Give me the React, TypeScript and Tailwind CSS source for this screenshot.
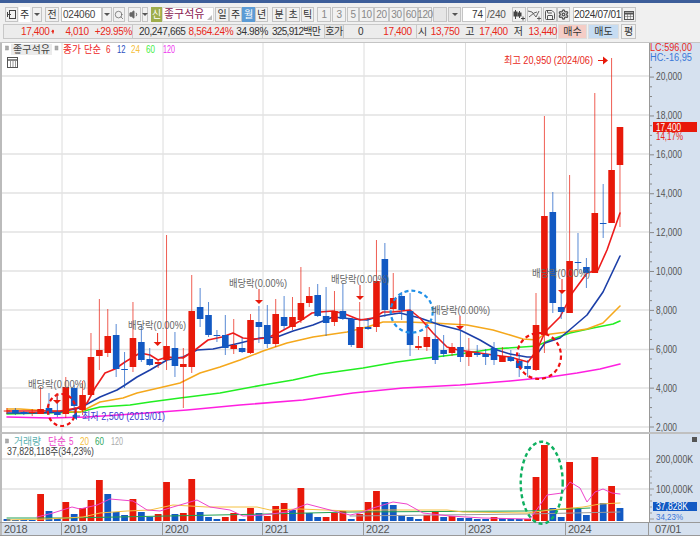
import { Save, Search, Settings, Volume1 } from "lucide-react";

type Candle = [number, number, number, number, number];

// wick top, wick bottom, body top, body bottom, 1 = red / 0 = blue (page pixel y)
const candles: Candle[] = [
  [408, 414, 410.5, 411.5, 1], [408, 415, 410, 413, 0], [411, 415, 412, 414, 0], [409, 416, 412, 413, 1],
  [387, 414, 409, 414, 1], [393, 415, 408, 412, 0], [396, 417, 412, 415, 0], [377, 418, 387, 414, 1],
  [385, 413, 388, 406, 0], [381, 415, 395, 410, 1], [333, 392, 357, 395, 1], [299, 370, 350, 356, 1],
  [309, 357, 336, 353, 1], [324, 377, 335, 369, 0], [352, 388, 369, 370, 0], [302, 372, 338, 367, 1],
  [325, 362, 342, 360, 0], [348, 366, 359, 365, 0], [360, 368, 362, 364, 1], [235, 370, 346, 360, 1],
  [332, 377, 348, 366, 0], [348, 408, 364, 367, 1], [275, 373, 311, 367, 1], [288, 327, 307, 319, 0],
  [302, 337, 315, 335, 0], [330, 342, 335, 336, 0], [315, 355, 335, 348, 0], [319, 354, 345, 349, 1],
  [338, 353, 348, 352, 0], [314, 354, 320, 353, 1], [306, 343, 322, 327, 0], [305, 348, 325, 344, 0],
  [299, 347, 314, 344, 1], [296, 330, 317, 326, 0], [297, 330, 317, 327, 1], [267, 323, 303, 320, 1],
  [287, 307, 296, 303, 1], [284, 317, 295, 316, 0], [287, 336, 316, 323, 0], [291, 326, 311, 322, 1],
  [283, 320, 311, 319, 0], [318, 347, 319, 345, 0], [302, 348, 327, 348, 1], [318, 330, 327, 329, 0],
  [240, 332, 281, 327, 1], [243, 317, 259, 310, 0], [273, 312, 298, 309, 1], [292, 320, 296, 310, 0],
  [293, 356, 311, 345, 0], [336, 350, 346, 348, 1], [323, 351, 337, 347, 1], [307, 364, 339, 360, 0],
  [335, 357, 350, 354, 0], [343, 356, 347, 353, 1], [330, 362, 347, 357, 0], [338, 366, 352, 357, 1],
  [345, 357, 353, 355, 0], [349, 365, 354, 357, 0], [342, 365, 348, 360, 0], [347, 362, 356, 362, 1],
  [350, 362, 357, 361, 0], [353, 377, 361, 368, 0], [360, 377, 366, 369, 0], [293, 371, 325, 370, 1],
  [116, 353, 216, 335, 1], [192, 313, 212, 303, 0], [290, 319, 307, 312, 0], [175, 313, 261, 313, 1],
  [233, 270, 262, 263, 0], [258, 288, 267, 273, 0], [93, 273, 213, 273, 1], [184, 238, 223, 223.8, 0],
  [58, 223, 170, 223, 1], [127, 227, 127, 165, 1],
];

// volume bar top and colour (1 = red)
const volumes: [number, number][] = [
  [519, 0], [520, 0], [520, 0], [520, 0], [494, 1], [511, 0], [518, 0], [502, 1], [514, 0], [508, 1], [500, 1], [480, 1], [494, 0],
  [512, 0], [515, 0], [499, 1], [512, 0], [517, 0], [514, 1], [482, 1], [514, 0], [513, 1], [479, 1], [512, 0], [517, 0], [519, 0],
  [517, 1], [513, 1], [519, 0], [508, 1], [513, 0], [516, 1], [506, 1], [503, 1], [510, 0], [488, 1], [513, 0], [517, 0], [517, 1],
  [513, 1], [511, 1], [519, 0], [514, 1], [502, 1], [491, 1], [502, 0], [505, 0], [516, 0], [517, 0], [519, 0], [515, 1], [511, 1],
  [517, 0], [516, 1], [518, 0], [518, 0], [519, 0], [519, 0], [517, 1], [518, 0], [519, 0], [519, 0], [519, 1], [477, 1], [445, 1],
  [508, 0], [517, 0], [462, 1], [509, 0], [515, 0], [457, 1], [503, 0], [486, 1], [508, 0],
];

const xOf = (i: number) => 7 + i * 8.397;

const ma6 = "7,411 40,411 60,411 77,408 87,403 95,388 105,373 115,369 125,362 140,353 150,355 158,360 167,357 183,358 195,350 208,340 222,337 233,333 243,338 253,339 267,338 280,332 300,321 312,313 320,312 333,311 345,314 360,320 373,318 383,312 393,312 410,310 420,318 433,333 447,347 458,350 473,352 493,355 510,357 528,362 537,350 545,332 560,317 573,292 587,273 598,270 607,250 620,213";
const ma12 = "7,413 40,413 60,412 80,408 100,397 117,390 125,385 137,377 150,370 167,360 183,357 197,350 213,349 227,346 240,343 260,338 277,337 293,331 313,325 333,317 353,319 367,320 377,317 387,315 400,313 420,318 440,325 460,330 480,340 497,350 510,354 527,357 535,357 545,343 560,338 573,327 587,315 603,292 620,256";
const ma24 = "7,409 20,409 50,411 80,412 100,402 123,398 137,393 163,387 180,383 200,373 220,367 240,360 263,351 287,343 313,337 347,332 367,327 383,322 407,322 433,323 467,325 493,330 510,335 523,339 537,340 543,335 567,332 587,329 603,323 620,306";
const ma60 = "7,414 80,412 100,407 130,405 150,402 180,398 220,393 263,385 293,380 320,374 363,368 397,362 427,358 460,354 493,349 537,346 550,340 570,333 593,328 613,324 620,321";
const ma120 = "7,417 50,418 87,417 133,414 187,410 240,405 303,400 353,393 403,388 460,385 510,381 550,377 577,373 600,369 620,364";

const volMa5 = "37,517 53,513 72,507 80,509 97,505 110,499 133,501 147,510 160,511 173,507 197,500 210,507 230,510 243,516 263,515 287,512 307,504 330,510 350,515 360,513 373,508 393,502 407,504 423,513 450,516 483,518 530,519 540,505 547,495 562,493 570,482 580,488 587,502 595,492 603,489 612,493 620,494";
const volMa20 = "7,520 47,519 83,517 100,513 127,511 150,510 173,505 207,507 257,507 270,510 300,509 350,511 383,510 447,510 463,512 527,513 550,510 583,507 600,504 620,503";
const volMa60 = "7,518 67,518 167,516 267,514 350,512 527,511 590,508";
const volMa120 = "350,516 527,514 620,512";

const gridX = [62, 163, 263, 364, 465.5, 566.5];
const priceY = [76, 115, 154, 193, 232, 271, 310, 349.5, 388, 427];
const priceLabels: [string, number][] = [
  ["20,000", 26], ["18,000", 26], ["16,000", 26], ["14,000", 26], ["12,000", 26],
  ["10,000", 26], ["8,000", 21], ["6,000", 21], ["4,000", 21], ["2,000", 21],
];

const divLabels: [number, number][] = [[28, 384], [128, 325], [229, 283], [331, 279], [432, 310], [532, 273]];
const divArrows: [number, number, number][] = [[57, 393, 400], [157.6, 333, 342], [259, 289, 300], [360, 285, 296], [460, 316, 326], [562, 279, 290]];

const Btn = ({ className = "", children }: { className?: string; children?: React.ReactNode }) => (
  <div className={`h-[15px] flex items-center justify-center shrink-0 border border-[#c4c4c4] bg-[#f1f1f1] text-[#333] text-[10px] leading-none ${className}`}>
    {children}
  </div>
);

const Drop = ({ className = "" }: { className?: string }) => (
  <Btn className={className}>
    <div className="w-0 h-0 border-x-[3px] border-x-transparent border-t-[3px] border-t-[#555]" />
  </Btn>
);

const Cell = ({ className = "", children }: { className?: string; children?: React.ReactNode }) => (
  <div className={`h-full flex items-center shrink-0 whitespace-nowrap border-r border-[#c8c8c8] text-[10px] tracking-[-0.35px] ${className}`}>
    {children}
  </div>
);

// narrow chart text: the width is taken from the reference
const T = ({ x, y, w, size = 10.5, fill, children }: { x: number; y: number; w: number; size?: number; fill: string; children: React.ReactNode }) => (
  <text x={x} y={y} fontSize={size} fill={fill} textLength={w} lengthAdjust="spacingAndGlyphs">{children}</text>
);

const Toolbar = () => (
  <div className="h-[15px] mt-[4px] flex pl-[5px] items-center">
    <Btn className="w-[13px]">
      <svg width="11" height="11" viewBox="0 0 11 11" fill="none" stroke="#444">
        <rect x="3.5" y="1.5" width="6" height="8" />
        <path d="M1 5.5h4M1.5 3v5" />
      </svg>
    </Btn>
    <Btn className="w-[11px] ml-[1px] !bg-white !border-white">주</Btn>
    <Drop className="w-[10px] ml-[2px]" />
    <Btn className="w-[14px] ml-[3px]">전</Btn>
    <div className="w-[41px] h-[15px] ml-[2px] bg-white border border-[#c4c4c4] text-[10px] text-[#444] flex items-center pl-[1px] tracking-[-0.2px]">024060</div>
    <Drop className="w-[10px]" />
    <Btn className="w-[12px] ml-[1px]"><Search size={10} strokeWidth={1.6} color="#555" /></Btn>
    <Btn className="w-[13px] ml-[3px]"><Volume1 size={11} fill="#666" color="#666" /></Btn>
    <Drop className="w-[6px] ml-[1px]" />
    <div className="w-[11px] h-[15px] ml-[3px] bg-[#9fae4c] text-white text-[10px] flex items-center justify-center">신</div>
    <div className="relative w-[52px] h-[15px] bg-white border border-[#d8d8d8] text-[11px] text-[#8a2050] pl-[1px] flex items-center">
      좋구석유
      <div className="absolute right-[1px] bottom-[1px] w-0 h-0 border-l-[5px] border-l-transparent border-b-[5px] border-b-[#bbb]" />
    </div>
    <Btn className="w-[14px] ml-[1px]">일</Btn>
    <Btn className="w-[13px]">주</Btn>
    <Btn className="w-[13px] !bg-[#5b9bd5] !border-[#5b9bd5] !text-white">월</Btn>
    <Btn className="w-[13px]">년</Btn>
    <Btn className="w-[14px] ml-[4px]">분</Btn>
    <Btn className="w-[14px]">초</Btn>
    <Btn className="w-[13px] ml-[1px]">틱</Btn>
    {[
      ["1", "w-[14px] ml-[3px]"], ["3", "w-[14px] ml-[1px]"], ["5", "w-[12px] ml-[1px]"], ["10", "w-[15px]"],
      ["20", "w-[15px]"], ["30", "w-[15px]"], ["60", "w-[14px]"], ["120", "w-[14px]"],
    ].map(([t, c]) => (
      <Btn key={t} className={`${c} !text-[#888] tracking-[-0.4px]`}>{t}</Btn>
    ))}
    <Btn className="w-[14px] ml-[1px] !bg-[#e6e6e6]" />
    <Drop className="w-[13px] ml-[1px] !bg-[#e6e6e6]" />
    <div className="w-[24px] h-[15px] ml-[1px] bg-white border border-[#c4c4c4] text-[10px] text-[#333] flex items-center justify-end pr-[2px]">74</div>
    <div className="w-[20px] text-[10px] text-[#555] pl-[1px] tracking-[-0.2px]">/240</div>
    <Btn className="w-[14px] ml-[6px]">
      <svg width="12" height="12" viewBox="0 0 12 12" fill="none" stroke="#444">
        <path d="M2.5 1v9" /><rect x="1" y="3" width="3" height="4" fill="#444" />
        <path d="M6.5 2v7" /><rect x="5" y="4" width="3" height="3" fill="#444" />
        <path d="M8 9.5h4M10 7.5v4" />
      </svg>
    </Btn>
    <Btn className="w-[15px] ml-[1px]">
      <svg width="13" height="12" viewBox="0 0 13 12" fill="none" stroke="#555" strokeWidth=".9">
        <path d="M0 2l4 1 4 5 3-6" /><path d="M1 8l5-4 3-1" /><path d="M9 9.5h4M11 7.5v4" />
      </svg>
    </Btn>
    <Btn className="w-[14px] ml-[1px]"><Save size={12} strokeWidth={1.8} color="#444" /></Btn>
    <Btn className="w-[13px]"><Settings size={11} strokeWidth={3} color="#555" /></Btn>
    <div className="w-[49px] h-[15px] ml-[3px] bg-white border border-[#c4c4c4] text-[10px] text-[#333] flex items-center justify-center tracking-[-0.3px]">2024/07/01</div>
    <Btn className="w-[14px]">
      <svg width="10" height="10" viewBox="0 0 10 10" fill="none" stroke="#555">
        <rect x=".5" y="1.5" width="9" height="8" /><path d="M.5 3.5h9" strokeWidth="2" /><path d="M3.5 4v5M6.5 4v5M1 6.5h8" strokeWidth=".5" />
      </svg>
    </Btn>
  </div>
);

const QuoteBar = () => (
  <div className="h-[15px] mt-[2px] flex pl-[3px] items-center">
    <div className="flex h-full bg-[#ececec] border border-[#c8c8c8] text-[#e8281a]">
      <Cell className="w-[129px] pl-[17px]">
        <span>17,400</span>
        <svg width="9" height="9" viewBox="0 0 9 9" className="ml-[1px]"><path d="M4.5 0L9 5H6v4H3V5H0z" fill="#e8190a" /></svg>
        <span className="ml-[11px]">4,010</span>
        <span className="ml-[6px]">+29.95%</span>
      </Cell>
      <Cell className="w-[130px] pl-[6px] text-[#333]">
        <span>20,247,665</span>
        <span className="ml-[3px] text-[#e8281a]">8,564.24%</span>
        <span className="ml-[3px]">34.98%</span>
      </Cell>
      <Cell className="w-[62px] pl-[9px] text-[#333]">
        <span className="tracking-[-0.7px]">325,912백만</span>
      </Cell>
      <Cell className="w-[19px] justify-center bg-[#e4e4e4] text-[#333]">호가</Cell>
      <Cell className="w-[73px]">
        <span className="ml-[14px] text-[#333]">0</span>
        <span className="ml-[20px]">17,400</span>
      </Cell>
      <div className="w-[139px] flex items-center text-[10px] tracking-[-0.35px]">
        <span className="ml-[1px] text-[#333]">시</span>
        <span className="ml-[4px]">13,750</span>
        <span className="ml-[6px] text-[#333]">고</span>
        <span className="ml-[5px]">17,400</span>
        <span className="ml-[6px] text-[#333]">저</span>
        <span className="ml-[6px]">13,440</span>
      </div>
    </div>
    <Btn className="w-[29px] ml-[1px] !bg-[#f5cdc6] !border-[#ddd]">매수</Btn>
    <Btn className="w-[31px] ml-[1px] !bg-[#c6dcf2] !border-[#ddd]">매도</Btn>
    <Btn className="w-[15px] ml-[2px]">평</Btn>
  </div>
);

const VGrid = ({ y1, y2 }: { y1: number; y2: number }) => (
  <>
    {gridX.map((x) => (
      <line key={x} x1={x} x2={x} y1={y1} y2={y2} stroke="#dcdcdc" strokeWidth="1" />
    ))}
  </>
);

const Line = ({ points, color, width = 1.4 }: { points: string; color: string; width?: number }) => (
  <polyline points={points} fill="none" stroke={color} strokeWidth={width} strokeLinejoin="round" strokeLinecap="round" />
);

const PriceChart = () => (
  <svg width="647" height="389" viewBox="2 43 647 389" className="block">
    <VGrid y1={43} y2={432} />
    {priceY.map((y) => (
      <line key={y} x1={2} x2={649} y1={y} y2={y} stroke="#e2e2e2" strokeWidth="1.4" />
    ))}
    <Line points={ma120} color="#ff1fe0" width={1.6} />
    <Line points={ma60} color="#22ee22" width={1.6} />
    <Line points={ma24} color="#f5a81c" width={1.6} />
    <Line points={ma12} color="#1c3fa8" width={1.6} />
    <Line points={ma6} color="#ee1c1c" width={1.6} />
    {candles.map(([wt, wb, bt, bb, up], i) => {
      const x = xOf(i);
      const color = up ? "#e8190a" : "#1259c3";
      return (
        <g key={i}>
          <line x1={x} x2={x} y1={wt} y2={wb} stroke={color} strokeOpacity=".7" strokeWidth="1" />
          <rect x={x - 3.3} y={Math.min(bt, bb)} width="6.6" height={Math.max(Math.abs(bb - bt), 1)} fill={color} />
        </g>
      );
    })}
    <ellipse cx="61.7" cy="410" rx="14" ry="16" fill="none" stroke="#ee1111" strokeWidth="2.2" strokeDasharray="4 3" />
    <ellipse cx="411.7" cy="311.7" rx="21" ry="21" fill="none" stroke="#2090e8" strokeWidth="2.2" strokeDasharray="4 3" />
    <ellipse cx="539" cy="356" rx="22" ry="23" fill="none" stroke="#ee1111" strokeWidth="2.2" strokeDasharray="4 3" />
    {divArrows.map(([x, y1, y2]) => (
      <g key={x}>
        <line x1={x} x2={x} y1={y1} y2={y2} stroke="#e8281a" />
        <path d={`M${x - 4} ${y2}h8l-4 4z`} fill="#e8190a" />
      </g>
    ))}
    {divLabels.map(([x, y]) => (
      <T key={x} x={x} y={y + 4} w={58} fill="#666">배당락(0.00%)</T>
    ))}
    <T x={504} y={64} w={89} fill="#e8281a">최고 20,950 (2024/06)</T>
    <line x1="598" x2="604" y1="60.5" y2="60.5" stroke="#e8190a" />
    <path d="M603 56.5l5 4-5 4z" fill="#e8190a" />
    <T x={82} y={420} w={83} fill="#3a3ad0">최저 2,500 (2019/01)</T>
    <path d="M72 416l5-4v8z" fill="#1259c3" />
    <line x1="76" x2="80" y1="416" y2="416" stroke="#1259c3" />
    <rect x="5.5" y="46" width="3" height="4" fill="#aaa" stroke="#999" strokeWidth=".5" />
    <rect x="11" y="44" width="41" height="11" fill="#ebebeb" />
    <T x={13} y={53} w={37} size={10} fill="#444">좋구석유</T>
    <rect x="55" y="46" width="3" height="4" fill="#aaa" stroke="#999" strokeWidth=".5" />
    <T x={63} y={53} w={18} size={10} fill="#ee1c1c">종가</T>
    <T x={84} y={53} w={17} size={10} fill="#ee1c1c">단순</T>
    <T x={106} y={53} w={4.5} size={10} fill="#ee1c1c">6</T>
    <T x={117} y={53} w={8.5} size={10} fill="#2a4fc0">12</T>
    <T x={131} y={53} w={9} size={10} fill="#f5c040">24</T>
    <T x={146} y={53} w={9} size={10} fill="#44ee44">60</T>
    <T x={163} y={53} w={12} size={10} fill="#ee33ee">120</T>
    <g fill="none" stroke="#555">
      <rect x="7.5" y="57.5" width="10" height="10" />
      <path d="M8 60h9" strokeWidth="1.4" />
      <path d="M10.5 61v6M13 61v6M15.5 61v6" strokeWidth=".6" />
    </g>
  </svg>
);

const PriceAxis = () => (
  <svg width="50" height="389" viewBox="650 43 50 389" className="block">
    <T x={650} y={51} w={42} size={10} fill="#e8281a">LC:596,00</T>
    <T x={650} y={60.5} w={42} size={10} fill="#3a78d8">HC:-16,95</T>
    {Array.from({ length: 40 }, (_, k) => {
      const y = 427 - k * 9.72;
      return y > 64 ? <line key={k} x1={650} x2={k % 4 === 0 ? 654 : 652} y1={y} y2={y} stroke="#888" /> : null;
    })}
    {priceLabels.map(([t, w], i) => (
      <T key={t} x={656} y={priceY[i] + 3.5} w={w} fill="#555">{t}</T>
    ))}
    <T x={656} y={140} w={27} size={10} fill="#e8281a">14,17%</T>
    <rect x="653" y="122" width="44" height="10" fill="#e8190a" />
    <T x={656} y={130.5} w={25} fill="#fff">17,400</T>
  </svg>
);

const VolumeChart = () => (
  <svg width="647" height="88" viewBox="2 434 647 88" className="block overflow-visible">
    <VGrid y1={434} y2={522} />
    <line x1={2} x2={649} y1={459} y2={459} stroke="#e2e2e2" strokeWidth="1.4" />
    <line x1={2} x2={649} y1={489} y2={489} stroke="#e2e2e2" strokeWidth="1.4" />
    {volumes.map(([top, up], i) => (
      <rect key={i} x={xOf(i) - 3.4} y={top} width="6.8" height={521 - top} fill={up ? "#e8190a" : "#1259c3"} />
    ))}
    <Line points={volMa120} color="#999" width={1} />
    <Line points={volMa60} color="#22a050" width={1} />
    <Line points={volMa20} color="#f5c040" width={1} />
    <Line points={volMa5} color="#ee44cc" width={1} />
    <ellipse cx="541.7" cy="482.7" rx="21" ry="41" fill="none" stroke="#10b060" strokeWidth="2.4" strokeDasharray="4 3" />
    <rect x="5.5" y="439" width="3" height="4" fill="#aaa" stroke="#999" strokeWidth=".5" />
    <T x={14} y={445} w={27} size={10} fill="#5ab0b0">거래량</T>
    <T x={48} y={445} w={18} size={10} fill="#ee44cc">단순</T>
    <T x={69} y={445} w={4.5} size={10} fill="#ee44cc">5</T>
    <T x={80} y={445} w={9} size={10} fill="#f5c040">20</T>
    <T x={95} y={445} w={9} size={10} fill="#30a860">60</T>
    <T x={111} y={445} w={12} size={10} fill="#aaa">120</T>
    <T x={7} y={454.5} w={87} size={10} fill="#444">37,828,118주(34,23%)</T>
  </svg>
);

const VolumeAxis = () => (
  <svg width="50" height="88" viewBox="650 434 50 88" className="block">
    {Array.from({ length: 9 }, (_, k) => (
      <line key={k} x1={650} x2={k % 5 === 0 ? 654 : 652} y1={519 - k * 6} y2={519 - k * 6} stroke="#999" />
    ))}
    <rect x="692" y="437" width="5" height="5" fill="#555" />
    <T x={656} y={462.5} w={37} fill="#555">200,000K</T>
    <T x={656} y={492.5} w={37} fill="#555">100,000K</T>
    <rect x="653" y="502" width="44" height="9" fill="#1259c3" />
    <T x={656} y={510} w={32} fill="#fff">37,828K</T>
    <T x={656} y={519.5} w={27} size={9} fill="#3a78d8">34,23%</T>
  </svg>
);

const years = [
  ["2018", "w-[60px]"], ["2019", "w-[101px]"], ["2020", "w-[100px]"], ["2021", "w-[101px]"],
  ["2022", "w-[102px]"], ["2023", "w-[100px]"], ["2024", "w-[83px]"],
];

const App = () => (
  <div className="w-[700px] h-[536px] overflow-hidden bg-[#f0f0f0] [font-family:'Liberation_Sans','Noto_Sans_CJK_KR',sans-serif]">
    <div className="h-[3px] bg-[#3d5e9a]" />
    <Toolbar />
    <QuoteBar />
    <div className="mt-[3px] flex flex-col border-t border-[#c4c4c4] h-[494px]">
      <div className="flex h-[389px] overflow-hidden">
        <div className="w-[2px] bg-[#bbbbbb]" />
        <div className="w-[647px] bg-white"><PriceChart /></div>
        <div className="w-[51px] bg-[#d6e1ef] border-l border-[#999]"><PriceAxis /></div>
      </div>
      <div className="h-[2px] bg-[#c0c0c0]" />
      <div className="relative z-10 flex h-[88px]">
        <div className="w-[2px] bg-[#bbbbbb]" />
        <div className="w-[647px] bg-white"><VolumeChart /></div>
        <div className="w-[51px] bg-[#d6e1ef] border-l border-[#999]"><VolumeAxis /></div>
      </div>
      <div className="h-[14px] flex bg-[#d6e1ef] border-y border-[#999] text-[11px] text-[#555] tracking-[-0.3px] leading-[12px]">
        <div className="w-[2px] bg-[#bbbbbb]" />
        {years.map(([y, w]) => (
          <div key={y} className={`${w} pl-[2px] border-r border-[#999]`}>{y}</div>
        ))}
        <div className="pl-[6px]">07/01</div>
      </div>
    </div>
  </div>
);

export default App;
